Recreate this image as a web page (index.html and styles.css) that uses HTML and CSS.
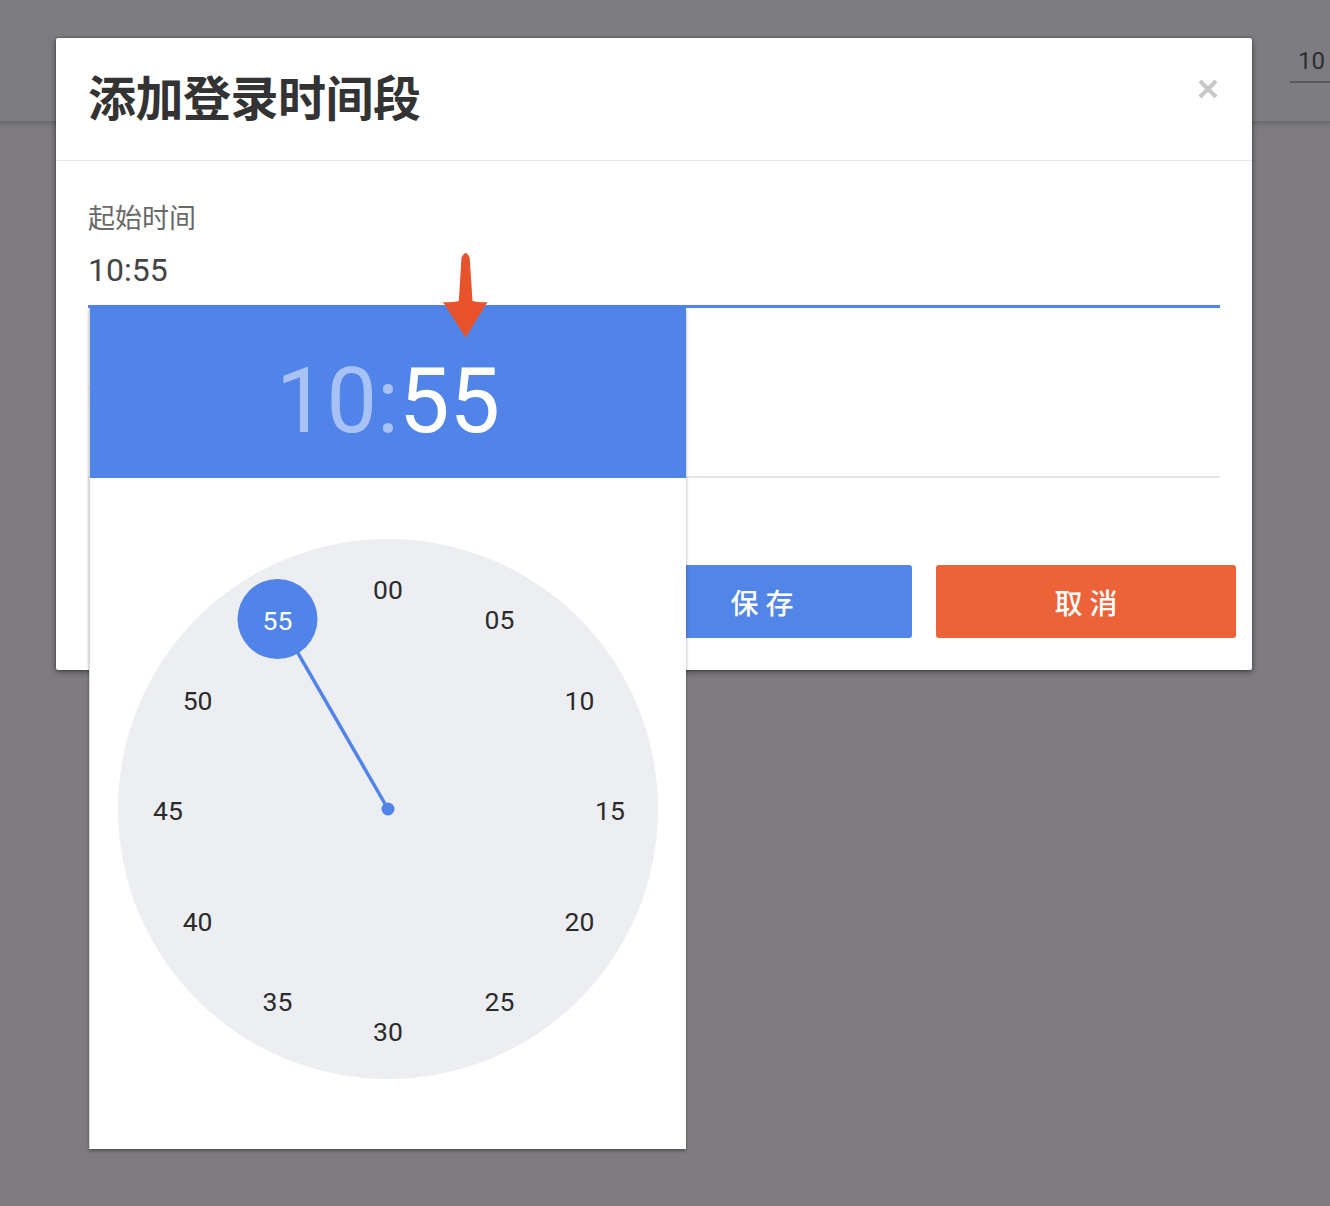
FILE: index.html
```html
<!DOCTYPE html>
<html lang="zh-CN">
<head>
<meta charset="utf-8">
<title>添加登录时间段</title>
<link rel="stylesheet" href="styles.css">
</head>
<body>
<div class="page">
  <div class="topbar">
    <div class="top-field">10</div>
  </div>
</div>

<div class="modal">
  <div class="modal-header">
    <h2 class="modal-title">添加登录时间段</h2>
    <button class="close" aria-label="关闭">
      <svg width="20" height="20" viewBox="0 0 20 20"><path d="M2 2 L18 18 M18 2 L2 18" stroke="#c8c8c8" stroke-width="4.2" stroke-linecap="butt"/></svg>
    </button>
  </div>
  <div class="modal-body">
    <div class="field field-first field-active">
      <div class="field-label">起始时间</div>
      <div class="field-input">10:55</div>
    </div>
    <div class="field field-second">
      <div class="field-label">结束时间</div>
      <div class="field-input">12:00</div>
    </div>
  </div>
  <div class="modal-footer">
    <button class="btn btn-save">保存</button>
    <button class="btn btn-cancel">取消</button>
  </div>
</div>

<div class="picker">
  <div class="picker-head"><span class="dim">10:</span><span class="sel">55</span></div>
  <div class="picker-body">
    <div class="dial">
      <svg class="hand" width="540" height="540" viewBox="0 0 540 540">
        <line x1="270" y1="270" x2="159.5" y2="78.6" stroke="#5184e8" stroke-width="3.5"/>
        <circle cx="159.5" cy="80" r="40" fill="#5184e8"/>
        <circle cx="270" cy="270" r="6.5" fill="#5184e8"/>
      </svg>
      <span class="num n00">00</span>
      <span class="num n05">05</span>
      <span class="num n10">10</span>
      <span class="num n15">15</span>
      <span class="num n20">20</span>
      <span class="num n25">25</span>
      <span class="num n30">30</span>
      <span class="num n35">35</span>
      <span class="num n40">40</span>
      <span class="num n45">45</span>
      <span class="num n50">50</span>
      <span class="num n55 num-sel">55</span>
    </div>
  </div>
</div>

<svg class="arrow" width="60" height="100" viewBox="435 245 60 100">
  <path d="M461.5 258 Q465.6 248 469.7 258 L472.5 301 Q480 303 487.5 302 L465.6 337.5 L443 302 Q451 303 458.8 301 Z" fill="#e9532b"/>
</svg>
</body>
</html>
```

FILE: styles.css
```css
* { box-sizing: border-box; }

html, body {
  margin: 0;
  padding: 0;
}

body {
  width: 1330px;
  height: 1206px;
  background: #7e7c81;
  font-family: "Noto Sans CJK SC", "Noto Sans", sans-serif;
  position: relative;
  overflow: hidden;
}

.page {
  width: 100%;
}

.topbar {
  height: 123px;
  background: #7d7c80;
  border-bottom: 2px solid #6d6c70;
  box-shadow: 0 2px 4px rgba(0, 0, 0, 0.12);
  display: flex;
  justify-content: flex-end;
}

.top-field {
  width: 40px;
  margin-top: 46px;
  height: 37px;
  padding-left: 8px;
  font: 400 24px/30px Roboto, "Liberation Sans", sans-serif;
  color: #2e2d30;
  border-bottom: 2px solid #5b5a5e;
}

/* Modal */
.modal {
  position: absolute;
  left: 56px;
  top: 38px;
  width: 1196px;
  background: #fff;
  border-radius: 2px;
  box-shadow: 0 2px 6px rgba(0, 0, 0, 0.45), 0 0 2px rgba(0, 0, 0, 0.4);
}

.modal-header {
  height: 123px;
  border-bottom: 1px solid #e8e8e8;
  padding: 0 32px;
  display: flex;
  align-items: center;
  justify-content: space-between;
}

.modal-title {
  margin: 0 0 9px;
  font-size: 48px;
  font-weight: 700;
  line-height: 60px;
  color: #333;
  letter-spacing: -0.5px;
}

.close {
  border: 0;
  background: none;
  padding: 0;
  margin-right: 2px;
  margin-top: -20px;
  width: 20px;
  height: 20px;
  display: flex;
}

.modal-body {
  padding: 0 32px;
}

.field-label {
  font-size: 27px;
  line-height: 40px;
  color: #696969;
}

.field-input {
  font: 400 32px/40px Roboto, "Liberation Sans", sans-serif;
  color: #444;
  margin-top: 13px;
}

.field-first {
  padding-top: 36px;
}

.field-first .field-input {
  padding-bottom: 15px;
  border-bottom: 3px solid #5184e8;
  line-height: 40px;
}

.field-second {
  padding-top: 62px;
}

.field-second .field-input {
  padding-bottom: 13px;
  border-bottom: 2px solid #e6e6e6;
}

.modal-footer {
  display: flex;
  justify-content: flex-end;
  gap: 24px;
  padding: 87px 16px 32px;
}

.btn {
  width: 300px;
  height: 73px;
  border: 0;
  border-radius: 3px;
  color: #fff;
  font-family: "Noto Sans CJK SC", sans-serif;
  font-size: 28px;
  font-weight: 500;
  letter-spacing: 7px;
  padding: 0 0 0 7px;
}

.btn-save { background: #5285e8; }
.btn-cancel { background: #ec6339; }

/* Time picker popup */
.picker {
  position: absolute;
  left: 89px;
  top: 308px;
  width: 597px;
  background: #fff;
  border-left: 1px solid #d6d6d6;
  box-shadow: 0 2px 3px rgba(0, 0, 0, 0.35);
}

.picker-head {
  height: 170px;
  background: #5184e8;
  display: flex;
  align-items: center;
  justify-content: center;
  padding-top: 17px;
  font: 400 90px/1 Roboto, "Liberation Sans", sans-serif;
}

.picker-head .dim { color: #a9c2f5; }
.picker-head .sel { color: #fff; }

.picker-body {
  padding: 61px 0 70px;
}

.dial {
  position: relative;
  width: 540px;
  height: 540px;
  margin: 0 auto;
  border-radius: 50%;
  background: #edeef2;
}

.hand {
  position: absolute;
  left: 0;
  top: 0;
}

.num {
  position: absolute;
  transform: translate(-50%, calc(-50% + 2.5px));
  font: 400 26.5px/1 Roboto, "Liberation Sans", sans-serif;
  color: #2b2b2b;
}

.num-sel { color: #fff; }

.n00 { left: 270px;   top: 49px; }
.n05 { left: 381.5px; top: 78.6px; }
.n10 { left: 461.4px; top: 159.5px; }
.n15 { left: 492px;   top: 270px; }
.n20 { left: 461.4px; top: 380.5px; }
.n25 { left: 381.5px; top: 461.4px; }
.n30 { left: 270px;   top: 491px; }
.n35 { left: 159.5px; top: 461.4px; }
.n40 { left: 79.6px;  top: 380.5px; }
.n45 { left: 50px;    top: 270px; }
.n50 { left: 79.6px;  top: 159.5px; }
.n55 { left: 159.5px; top: 80px; }

.arrow {
  position: absolute;
  left: 435px;
  top: 245px;
}
```
